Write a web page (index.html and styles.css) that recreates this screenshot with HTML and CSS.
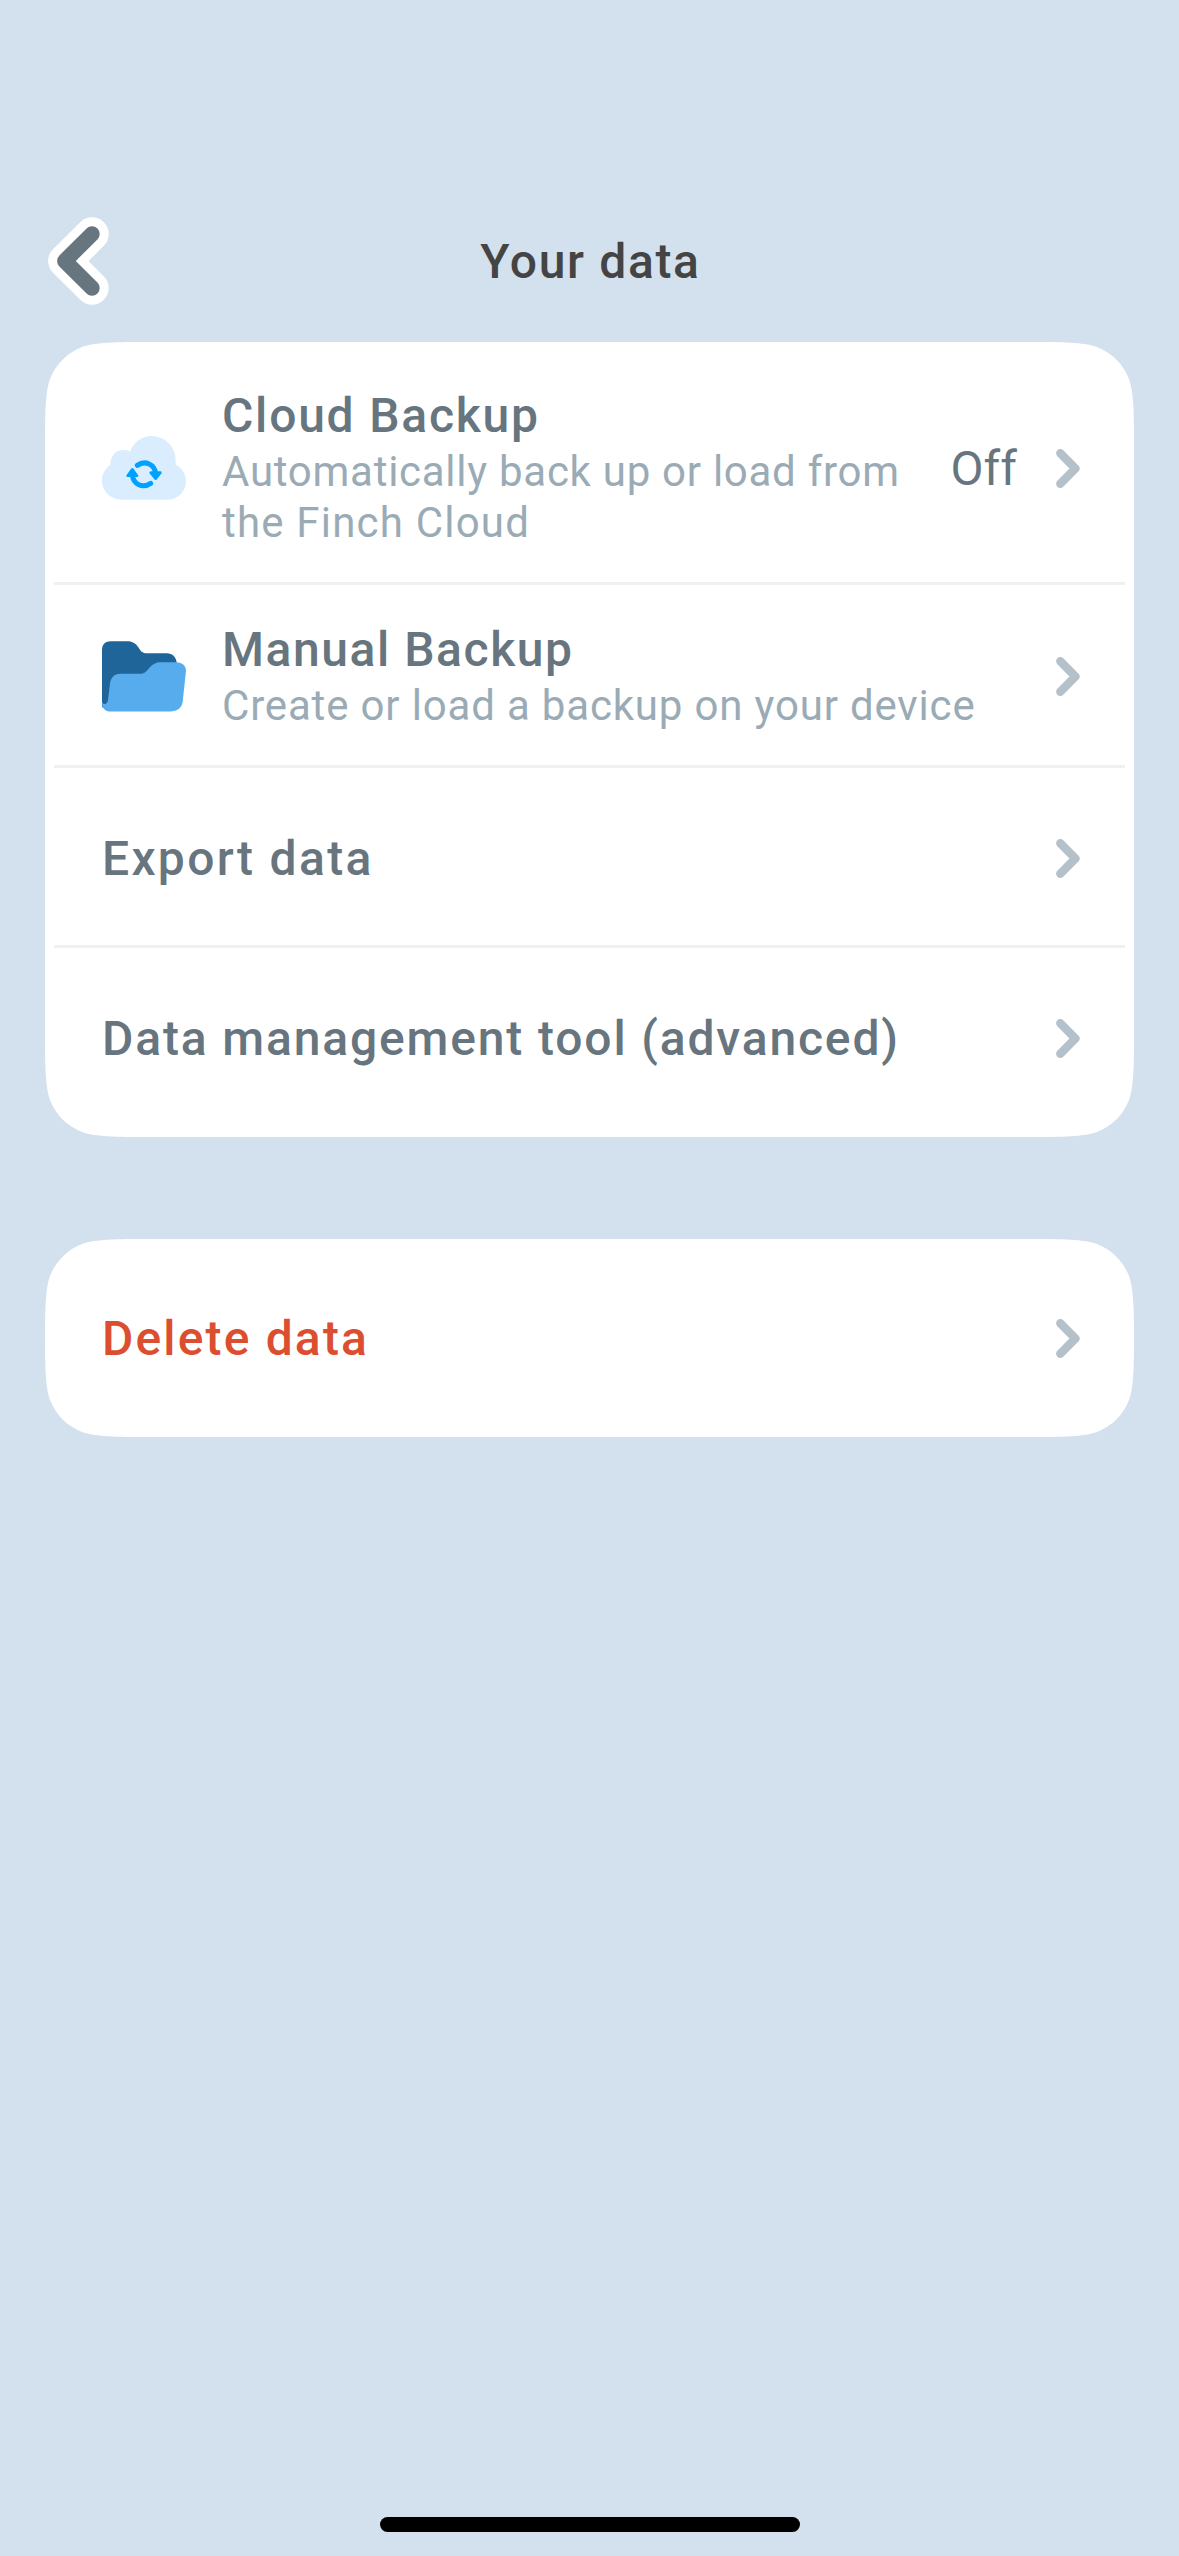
FILE: index.html
```
<!DOCTYPE html>
<html lang="en">
<head>
  <meta charset="UTF-8" />
  <meta name="viewport" content="width=device-width, initial-scale=1.0"/>
  <title>Your data</title>
  <link rel="stylesheet" href="styles.css">
</head>
<body>

<!-- Shared chevron -->
<svg class="sprite" width="0" height="0">
  <symbol id="chevron" viewBox="0 0 24 39">
    <path d="M4.3 4.3L19.4 19.5L4.3 34.7" fill="none" stroke="currentColor" stroke-width="8.4" stroke-linecap="round" stroke-linejoin="round"/>
  </symbol>
</svg>

<header class="topbar">
  <button class="back" aria-label="Back">
    <svg width="62" height="90" viewBox="0 0 62 90">
      <path d="M44 18L16.8 45L44 72" fill="none" stroke="#fff" stroke-width="33.4" stroke-linecap="round" stroke-linejoin="round"/>
      <path d="M44 18L16.8 45L44 72" fill="none" stroke="#67757f" stroke-width="15.4" stroke-linecap="round" stroke-linejoin="round"/>
    </svg>
  </button>
  <h1 class="page-title">Your data</h1>
</header>

<main class="content">
  <section class="card card-main">
    <a class="row row-cloud">
      <svg class="icon" width="84" height="64" viewBox="36 48 252 192">
        <path fill="#daedff" d="M95 239C60 239 36 212 36 181C36 161 46 145 61 134C61 108 78 90 98 90C106 90 113 91 120 95C131 67 155 48 184 48C226 48 257 82 257 120V134C276 143 288 162 288 184C288 215 264 239 232 239Z"/>
        <g fill="none" stroke="#00a2ff" stroke-width="15" stroke-linecap="round">
          <path d="M142 136C165 120 195 132 197 162"/>
          <path d="M182 190C159 206 129 194 127 164"/>
        </g>
        <g fill="#00a2ff" stroke="#00a2ff" stroke-width="8" stroke-linejoin="round">
          <path d="M182 158L211 158L197 176Z"/>
          <path d="M113 167L141 167L127 148Z"/>
        </g>
      </svg>
      <div class="text">
        <div class="title cloud-title">Cloud Backup</div>
        <div class="desc desc-cloud">Automatically back up or load from<br><span class="desc-wide">the Finch Cloud</span></div>
      </div>
      <span class="value">Off</span>
      <svg class="chevron" width="24" height="39"><use href="#chevron"/></svg>
    </a>
    <a class="row row-manual">
      <svg class="icon" width="84" height="71" viewBox="36 34 252 212">
        <path fill="#206599" d="M36 60C36 43 46 34 62 34H112C128 34 138 41 145 52C152 63 156 70 170 70H230C248 70 258 81 260 98V140H80V232H36Z"/>
        <path fill="#57acee" d="M36 215C38 226 52 226 54 210L60 162C62 144 72 132 92 132H150C165 132 170 124 179 113C188 103 198 97 214 97H258C278 97 288 108 288 123L278 216C275 235 262 245 240 245H62C46 245 36 235 36 220Z"/>
      </svg>
      <div class="text">
        <div class="title manual-title">Manual Backup</div>
        <div class="desc">Create or load a backup on your device</div>
      </div>
      <svg class="chevron" width="24" height="39"><use href="#chevron"/></svg>
    </a>
    <a class="row row-export">
      <div class="title title-short">Export data</div>
      <svg class="chevron" width="24" height="39"><use href="#chevron"/></svg>
    </a>
    <a class="row row-tool">
      <div class="title">Data management tool (advanced)</div>
      <svg class="chevron" width="24" height="39"><use href="#chevron"/></svg>
    </a>
  </section>

  <section class="card card-delete">
    <a class="row row-delete">
      <div class="title title-short danger">Delete data</div>
      <svg class="chevron" width="24" height="39"><use href="#chevron"/></svg>
    </a>
  </section>
</main>

<div class="home-indicator"></div>

</body>
</html>
```
FILE: styles.css
```
* { box-sizing: border-box; }

body {
  margin: 0;
  height: 2556px;
  display: flex;
  flex-direction: column;
  font-family: Roboto, "Liberation Sans", sans-serif;
  background: #d3e1ee;
  color: #67757f;
}

.sprite {
  position: absolute;
}

.topbar {
  height: 342px;
  padding: 179px 48px 0;
  display: grid;
  grid-template-columns: 1fr auto 1fr;
  align-items: center;
}

.back {
  padding: 0;
  border: none;
  background: none;
  justify-self: start;
  height: 90px;
}

.page-title {
  margin: 3px 0 0 2px;
  font-size: 48px;
  font-weight: 500;
  line-height: 60px;
  letter-spacing: 1.65px;
  color: #444;
}

.content {
  flex-grow: 1;
  display: flex;
  flex-direction: column;
  gap: 102px;
  padding: 0 45px;
}

.card {
  background: white;
}

/* continuous corners */
.card-main {
  clip-path: path("M0 99C0 65 1 48 5 37C11 22 22 11 37 5C48 1 65 0 99 0H990C1024 0 1041 1 1052 5C1067 11 1078 22 1084 37C1088 48 1089 65 1089 99V696C1089 730 1088 747 1084 758C1078 773 1067 784 1052 790C1041 794 1024 795 990 795H99C65 795 48 794 37 790C22 784 11 773 5 758C1 747 0 730 0 696Z");
}

.card-delete {
  clip-path: path("M0 99C0 65 1 48 5 37C11 22 22 11 37 5C48 1 65 0 99 0H990C1024 0 1041 1 1052 5C1067 11 1078 22 1084 37C1088 48 1089 65 1089 99C1089 133 1088 150 1084 161C1078 176 1067 187 1052 193C1041 197 1024 198 990 198H99C65 198 48 197 37 193C22 187 11 176 5 161C1 150 0 133 0 99Z");
}

.row {
  display: flex;
  align-items: center;
  margin: 0 9px;
  padding: 0 45px 0 48px;
}

.row + .row {
  border-top: 3px solid #f0f0f0;
}

.row-cloud {
  height: 240px;
  padding-top: 12px;
}

.row-manual {
  height: 183px;
  padding-top: 3px;
}

.row-export {
  height: 180px;
  padding-top: 4px;
}

.row-tool {
  height: 192px;
  padding-bottom: 8px;
}

.row-delete {
  height: 198px;
}

.icon {
  flex: none;
  margin-right: 36px;
}

.text {
  margin-bottom: 3px;
}

.title {
  font-size: 48px;
  font-weight: 500;
  line-height: 61px;
  letter-spacing: 1.85px;
  white-space: nowrap;
}

.cloud-title {
  letter-spacing: 1.78px;
}

.manual-title {
  letter-spacing: 1.56px;
}

.title-short {
  letter-spacing: 2.3px;
}

.danger {
  letter-spacing: 2.15px;
  color: #dc4e30;
}

.desc {
  font-size: 42px;
  line-height: 51px;
  letter-spacing: 0.83px;
  color: #9aabb6;
  white-space: nowrap;
}

.desc-cloud {
  letter-spacing: 0.73px;
}

.desc-wide {
  letter-spacing: 1.2px;
}

.value {
  margin-left: auto;
  margin-right: 39px;
  font-size: 48px;
  line-height: 61px;
}

.chevron {
  flex: none;
  margin-left: auto;
  color: #b4c1ca;
}

.value + .chevron {
  margin-left: 0;
}

.home-indicator {
  width: 420px;
  height: 15px;
  margin: 0 auto 24px;
  border-radius: 8px;
  background: black;
}
```
